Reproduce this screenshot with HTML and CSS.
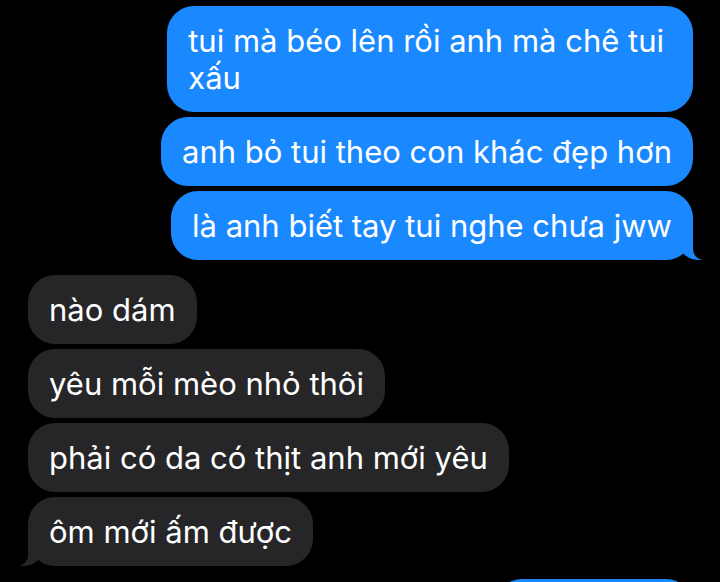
FILE: index.html
```html
<!DOCTYPE html>
<html lang="vi">
<head>
<meta charset="utf-8">
<title>Tin nhắn</title>
<link rel="stylesheet" href="styles.css">
</head>
<body>
<main class="chat">
  <div class="group sent-group">
    <div class="bubble sent wrapped">tui mà béo lên rồi anh mà chê tui<br>xấu</div>
    <div class="bubble sent">anh bỏ tui theo con khác đẹp hơn</div>
    <div class="bubble sent tail">là anh biết tay tui nghe chưa jww</div>
  </div>
  <div class="group received-group">
    <div class="bubble received">nào dám</div>
    <div class="bubble received">yêu mỗi mèo nhỏ thôi</div>
    <div class="bubble received">phải có da có thịt anh mới yêu</div>
    <div class="bubble received tail">ôm mới ấm được</div>
  </div>
  <div class="group sent-group next">
    <div class="bubble sent stub">&nbsp;</div>
  </div>
</main>
</body>
</html>
```

FILE: styles.css
```css
html, body {
  margin: 0;
  padding: 0;
  background: #000;
  overflow: hidden;
  height: 582px;
}

.chat {
  display: flex;
  flex-direction: column;
  gap: 15px;
  padding: 6px 27px 0 27px;
  font-family: Inter, "Noto Sans", "DejaVu Sans", sans-serif;
  font-size: 31px;
  line-height: 37px;
  color: #fff;
}

.group {
  display: flex;
  flex-direction: column;
  gap: 5px;
}

.sent-group { align-items: flex-end; }
.received-group { align-items: flex-start; margin-left: 1px; }

.bubble {
  position: relative;
  padding: 16px 21px;
  border-radius: 27px;
  white-space: nowrap;
}

.bubble.wrapped { padding-right: 29px; }

.sent { background: #1a88fe; }
.received { background: #262628; }

.sent.tail::before,
.sent.tail::after,
.received.tail::before,
.received.tail::after {
  content: "";
  position: absolute;
  bottom: 0;
  height: 25px;
}

.sent.tail::before {
  right: -9px;
  width: 22px;
  background: #1a88fe;
  border-bottom-left-radius: 18px 15px;
}
.sent.tail::after {
  right: -28px;
  width: 28px;
  background: #000;
  border-bottom-left-radius: 11px;
}

.received.tail::before {
  left: -8px;
  width: 22px;
  background: #262628;
  border-bottom-right-radius: 18px 15px;
}
.received.tail::after {
  left: -28px;
  width: 28px;
  background: #000;
  border-bottom-right-radius: 11px;
}

.next { margin-top: -2px; }
.stub { width: 156px; }
```
